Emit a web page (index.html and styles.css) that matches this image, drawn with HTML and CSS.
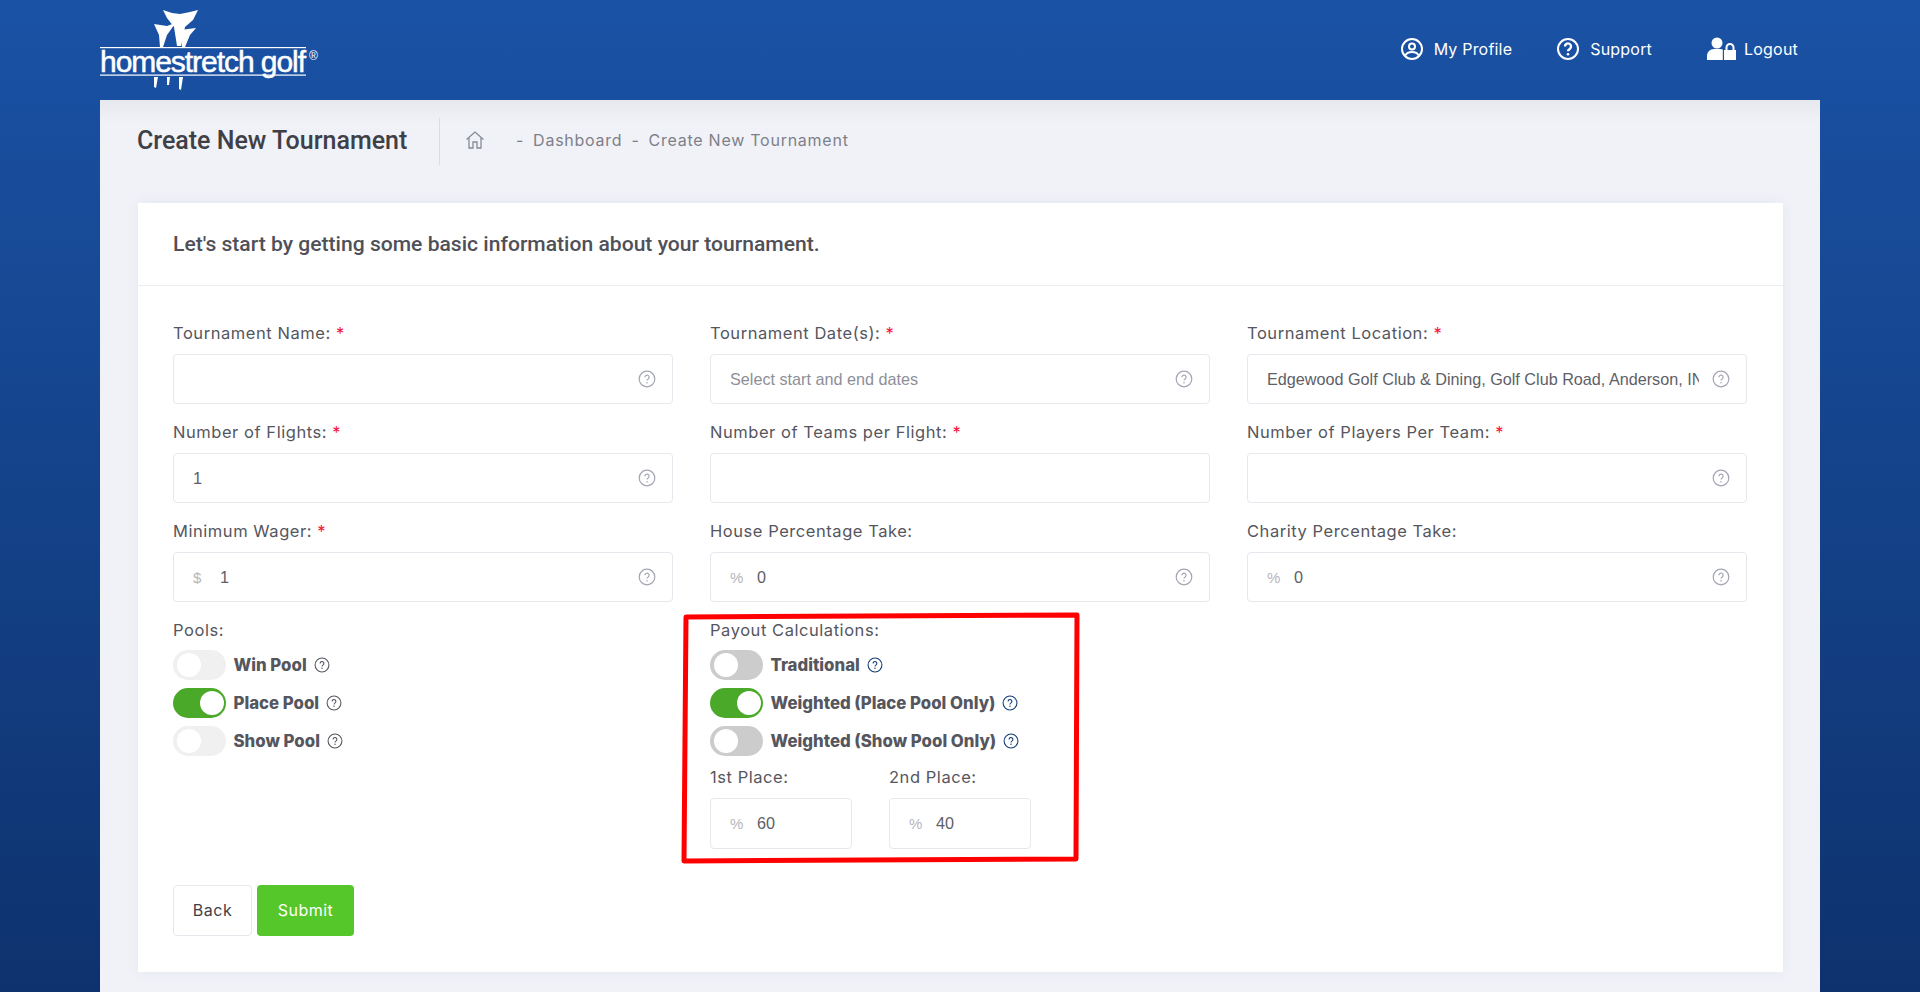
FILE: index.html
```html
<!DOCTYPE html>
<html lang="en">
<head>
    <meta charset="UTF-8">
    <meta name="viewport" content="width=device-width, initial-scale=1.0">
    <title>Create New Tournament</title>
    <link rel="stylesheet" href="styles.css">
</head>
<body>
    <svg class="icon-defs" width="0" height="0">
        <symbol id="help" viewBox="0 0 18 18">
            <circle cx="9" cy="9" r="7.8" fill="none" stroke="currentColor" stroke-width="1.2"/>
            <path d="M6.9 7.2a2.1 2.1 0 1 1 3.3 1.7c-.8.5-1.2.9-1.2 1.7" fill="none" stroke="currentColor" stroke-width="1.2"/>
            <circle cx="9" cy="12.7" r=".8" fill="currentColor"/>
        </symbol>
    </svg>

    <header class="top-bar">
        <svg class="logo" width="225" height="92" viewBox="0 0 225 92">
            <path fill="#fff" d="M63 10 72 13 80 14 90 12 98 10 93 20 85 27 81 46 77 46 74 27 67 18Z"/>
            <path fill="#fff" d="M54 24 67 26 75 23 72 28 67 35 63 47 60 47 59 35Z"/>
            <path fill="#fff" d="M80 30 96 28 90 35 85 47 82 47 81 38Z"/>
            <rect y="47" width="206" height="1.2" fill="#fff"/>
            <rect y="74.500" width="206" height="1.2" fill="#fff"/>
            <text class="logo-text" x="0" y="72">homestretch golf</text>
            <text class="logo-mark" x="209" y="60">®</text>
            <path fill="#fff" d="M54 77 58 77 56 88 54 87Z"/>
            <path fill="#fff" d="M67 77 70 77 69 85 67 85Z"/>
            <path fill="#fff" d="M79 77 83 77 81 90 79 89Z"/>
        </svg>
        <nav class="top-nav">
            <a class="nav-link">
                <svg width="24" height="24" viewBox="0 0 24 24" fill="none" stroke="#fff" stroke-width="2"><circle cx="12" cy="12" r="10"/><circle cx="12" cy="9.5" r="3"/><path d="M5.500 18.500c1-2.500 3.500-3.500 6.500-3.500s5.500 1 6.500 3.500"/></svg>
                My Profile
            </a>
            <a class="nav-link">
                <svg width="24" height="24" viewBox="0 0 24 24" fill="none" stroke="#fff" stroke-width="2"><circle cx="12" cy="12" r="10"/><path stroke-width="2.400" d="M9 9.500a3 3 0 1 1 4.700 2.400c-1.100.7-1.700 1.200-1.700 2.400"/><circle cx="12" cy="17.300" r="1.300" fill="#fff" stroke="none"/></svg>
                Support
            </a>
            <a class="nav-link nav-logout">
                <svg width="30" height="24" viewBox="0 0 30 24" fill="#fff"><circle cx="11" cy="6" r="5.500"/><path d="M1 23v-4c0-4 3-7 7-7h6c1 0 2 .2 2.800.6V23Z"/><path d="M18 13h12v10H18Z"/><path d="M20.500 13v-2.500a3.500 3.500 0 0 1 7 0V13" fill="none" stroke="#fff" stroke-width="2"/></svg>
                Logout
            </a>
        </nav>
    </header>

    <main class="content">
        <div class="toolbar">
            <h1 class="page-title">Create New Tournament</h1>
            <div class="breadcrumb">
                <svg class="home-icon" width="20" height="20" viewBox="0 0 20 20" fill="none" stroke="#858b96" stroke-width="1.300"><path d="M1.500 9.500 10 2l8.500 7.500"/><path d="M4 8v10h4v-6h4v6h4V8"/></svg>
                <span class="crumb-sep">-</span>
                <span>Dashboard</span>
                <span class="crumb-sep crumb-sep-last">-</span>
                <span>Create New Tournament</span>
            </div>
        </div>

        <section class="card">
            <div class="card-header">Let's start by getting some basic information about your tournament.</div>
            <form class="card-body">
                <div class="form-grid">
                    <div class="field">
                        <label class="field-label">Tournament Name: <span class="req">*</span></label>
                        <div class="input-box"><span class="input-value"></span><svg class="help"><use href="#help"/></svg></div>
                    </div>
                    <div class="field">
                        <label class="field-label">Tournament Date(s): <span class="req">*</span></label>
                        <div class="input-box"><span class="input-value placeholder">Select start and end dates</span><svg class="help"><use href="#help"/></svg></div>
                    </div>
                    <div class="field">
                        <label class="field-label">Tournament Location: <span class="req">*</span></label>
                        <div class="input-box"><span class="input-value">Edgewood Golf Club &amp; Dining, Golf Club Road, Anderson, IN, USA</span><svg class="help"><use href="#help"/></svg></div>
                    </div>
                    <div class="field">
                        <label class="field-label">Number of Flights: <span class="req">*</span></label>
                        <div class="input-box"><span class="input-value">1</span><svg class="help"><use href="#help"/></svg></div>
                    </div>
                    <div class="field">
                        <label class="field-label">Number of Teams per Flight: <span class="req">*</span></label>
                        <div class="input-box"><span class="input-value"></span></div>
                    </div>
                    <div class="field">
                        <label class="field-label">Number of Players Per Team: <span class="req">*</span></label>
                        <div class="input-box"><span class="input-value"></span><svg class="help"><use href="#help"/></svg></div>
                    </div>
                    <div class="field">
                        <label class="field-label">Minimum Wager: <span class="req">*</span></label>
                        <div class="input-box"><span class="addon">$</span><span class="input-value">1</span><svg class="help"><use href="#help"/></svg></div>
                    </div>
                    <div class="field">
                        <label class="field-label">House Percentage Take:</label>
                        <div class="input-box"><span class="addon">%</span><span class="input-value">0</span><svg class="help"><use href="#help"/></svg></div>
                    </div>
                    <div class="field">
                        <label class="field-label">Charity Percentage Take:</label>
                        <div class="input-box"><span class="addon">%</span><span class="input-value">0</span><svg class="help"><use href="#help"/></svg></div>
                    </div>

                    <div class="field">
                        <label class="field-label">Pools:</label>
                        <div class="switch-list">
                            <div class="switch-row"><span class="switch switch-light"></span><b>Win Pool</b><svg class="help help-small"><use href="#help"/></svg></div>
                            <div class="switch-row"><span class="switch on"></span><b>Place Pool</b><svg class="help help-small"><use href="#help"/></svg></div>
                            <div class="switch-row"><span class="switch switch-light"></span><b>Show Pool</b><svg class="help help-small"><use href="#help"/></svg></div>
                        </div>
                    </div>
                    <div class="field">
                        <label class="field-label">Payout Calculations:</label>
                        <div class="switch-list">
                            <div class="switch-row"><span class="switch"></span><b>Traditional</b><svg class="help help-small help-blue"><use href="#help"/></svg></div>
                            <div class="switch-row"><span class="switch on"></span><b>Weighted (Place Pool Only)</b><svg class="help help-small help-blue"><use href="#help"/></svg></div>
                            <div class="switch-row"><span class="switch"></span><b>Weighted (Show Pool Only)</b><svg class="help help-small help-blue"><use href="#help"/></svg></div>
                        </div>
                        <div class="place-row">
                            <div class="place-field">
                                <label class="field-label">1st Place:</label>
                                <div class="input-box"><span class="addon">%</span><span class="input-value">60</span></div>
                            </div>
                            <div class="place-field">
                                <label class="field-label">2nd Place:</label>
                                <div class="input-box"><span class="addon">%</span><span class="input-value">40</span></div>
                            </div>
                        </div>
                    </div>
                </div>

                <div class="form-actions">
                    <button type="button" class="btn btn-back">Back</button>
                    <button type="button" class="btn btn-submit">Submit</button>
                </div>
            </form>
        </section>
    </main>

    <!-- red marker drawn over the screenshot -->
    <svg class="marker" width="1920" height="992" viewBox="0 0 1920 992">
        <path d="M686 617 1077 615 1076 859 684 861Z" fill="none" stroke="#f00" stroke-width="5" stroke-linejoin="round"/>
    </svg>
</body>
</html>
```

FILE: styles.css
```css
* {
    box-sizing: border-box;
    margin: 0;
    padding: 0;
}

html, body {
    height: 992px;
    overflow: hidden;
}

body {
    position: relative;
    background: linear-gradient(180deg, #1a52a5 0%, #0e326d 100%);
    font-family: 'Inter', 'Liberation Sans', sans-serif;
    color: #4f5058;
}

.icon-defs {
    position: absolute;
}

.top-bar {
    height: 100px;
    padding: 0 122px 0 100px;
    display: flex;
    align-items: flex-start;
    justify-content: space-between;
}

.logo-text {
    font-family: 'Liberation Sans', sans-serif;
    font-size: 30px;
    letter-spacing: -1.05px;
    fill: #fff;
    stroke: #fff;
    stroke-width: 0.5px;
}

.logo-mark {
    font-family: 'Liberation Sans', sans-serif;
    font-size: 12px;
    fill: #fff;
}

.top-nav {
    display: flex;
    height: 100px;
    align-items: center;
    padding-bottom: 2px;
}

.nav-link {
    display: flex;
    align-items: center;
    gap: 10px;
    margin-left: 44px;
    color: #fff;
    font-size: 16px;
    letter-spacing: 0.2px;
}

.nav-logout {
    gap: 8px;
    margin-left: 54px;
}

.content {
    margin: 0 100px;
    height: 892px;
    background: linear-gradient(180deg, #e8e9ef 0, #f0f2f8 24px);
}

.toolbar {
    height: 103px;
    padding: 18px 0 0 37px;
    display: flex;
    align-items: flex-start;
}

.page-title {
    width: 303px;
    height: 47px;
    font-family: 'Roboto', sans-serif;
    font-size: 25px;
    font-weight: 500;
    line-height: 45px;
    color: #3f4047;
    border-right: 1px solid #dcdde3;
}

.breadcrumb {
    height: 47px;
    display: flex;
    align-items: center;
    padding: 0 0 4px 25px;
    font-size: 16px;
    letter-spacing: 0.75px;
    color: #7e8089;
}

.home-icon {
    margin-right: 31px;
}

.crumb-sep {
    margin-right: 9px;
}

.crumb-sep-last {
    margin-left: 9px;
}

.card {
    margin: 0 37px 0 38px;
    height: 769px;
    background: #fff;
    box-shadow: 0 0 13px rgba(82, 63, 105, 0.06);
}

.card-header {
    height: 83px;
    padding: 0 35px 2px;
    display: flex;
    align-items: center;
    border-bottom: 1px solid #ebedf2;
    font-family: 'Roboto', sans-serif;
    font-size: 21.1px;
    font-weight: 500;
    color: #4f5058;
}

.card-body {
    padding: 35px 36px 35px 35px;
}

.form-grid {
    display: grid;
    grid-template-columns: repeat(3, 500px);
    column-gap: 37px;
    row-gap: 16px;
}

.field-label {
    display: block;
    height: 24px;
    line-height: 24px;
    font-size: 16.5px;
    letter-spacing: 0.55px;
    color: #55565e;
    margin-bottom: 9px;
    white-space: nowrap;
}

.req {
    color: #f4143c;
}

.input-box {
    height: 50px;
    padding: 0 16px 0 19px;
    display: flex;
    align-items: center;
    border: 1px solid #e6e8ee;
    border-radius: 4px;
    background: #fff;
    font-family: 'Liberation Sans', sans-serif;
    font-size: 16.2px;
    color: #5e5f68;
}

.input-value {
    flex: 1;
    overflow: hidden;
    white-space: nowrap;
}

.placeholder {
    color: #8d8f98;
}

.addon {
    width: 27px;
    flex: none;
    font-size: 15px;
    color: #b4b6bd;
}

.help {
    width: 18px;
    height: 18px;
    margin-left: 13px;
    flex: none;
    color: #a3a5b3;
}

.help-small {
    width: 16px;
    height: 16px;
    margin-left: 7px;
    color: #55565e;
}

.help-blue {
    color: #123c78;
}

.switch-list {
    display: flex;
    flex-direction: column;
    gap: 8px;
    margin-top: -1px;
}

.switch-row {
    display: flex;
    align-items: center;
    font-size: 16.8px;
}

.switch-row b {
    margin-left: 7.5px;
    font-weight: 800;
    color: #55565e;
}

.switch {
    width: 53px;
    height: 30px;
    padding: 3px 4px;
    border-radius: 15px;
    background: #cccccc;
    display: flex;
}

.switch::after {
    content: '';
    width: 24px;
    height: 24px;
    border-radius: 50%;
    background: #fff;
}

.switch-light {
    background: #f0f0f0;
}

.switch.on {
    background: #4aa928;
    padding: 3px 2px;
    justify-content: flex-end;
}

.place-row {
    display: flex;
    gap: 37px;
    margin-top: 9px;
}

.place-field {
    width: 142px;
}

.place-field .field-label {
    margin-bottom: 9px;
}

.place-field .input-box {
    height: 51px;
}

.form-actions {
    display: flex;
    gap: 5px;
    margin-top: 36px;
}

.btn {
    height: 51px;
    padding-bottom: 2px;
    border-radius: 4px;
    font-family: 'Inter', sans-serif;
    font-size: 16px;
    letter-spacing: 0.5px;
}

.btn-back {
    width: 79px;
    background: #fff;
    border: 1px solid #e6e8ee;
    color: #3f4047;
}

.btn-submit {
    width: 97px;
    background: #55c72b;
    border: none;
    color: #fff;
}

.marker {
    position: absolute;
    top: 0;
    left: 0;
    pointer-events: none;
}
```
